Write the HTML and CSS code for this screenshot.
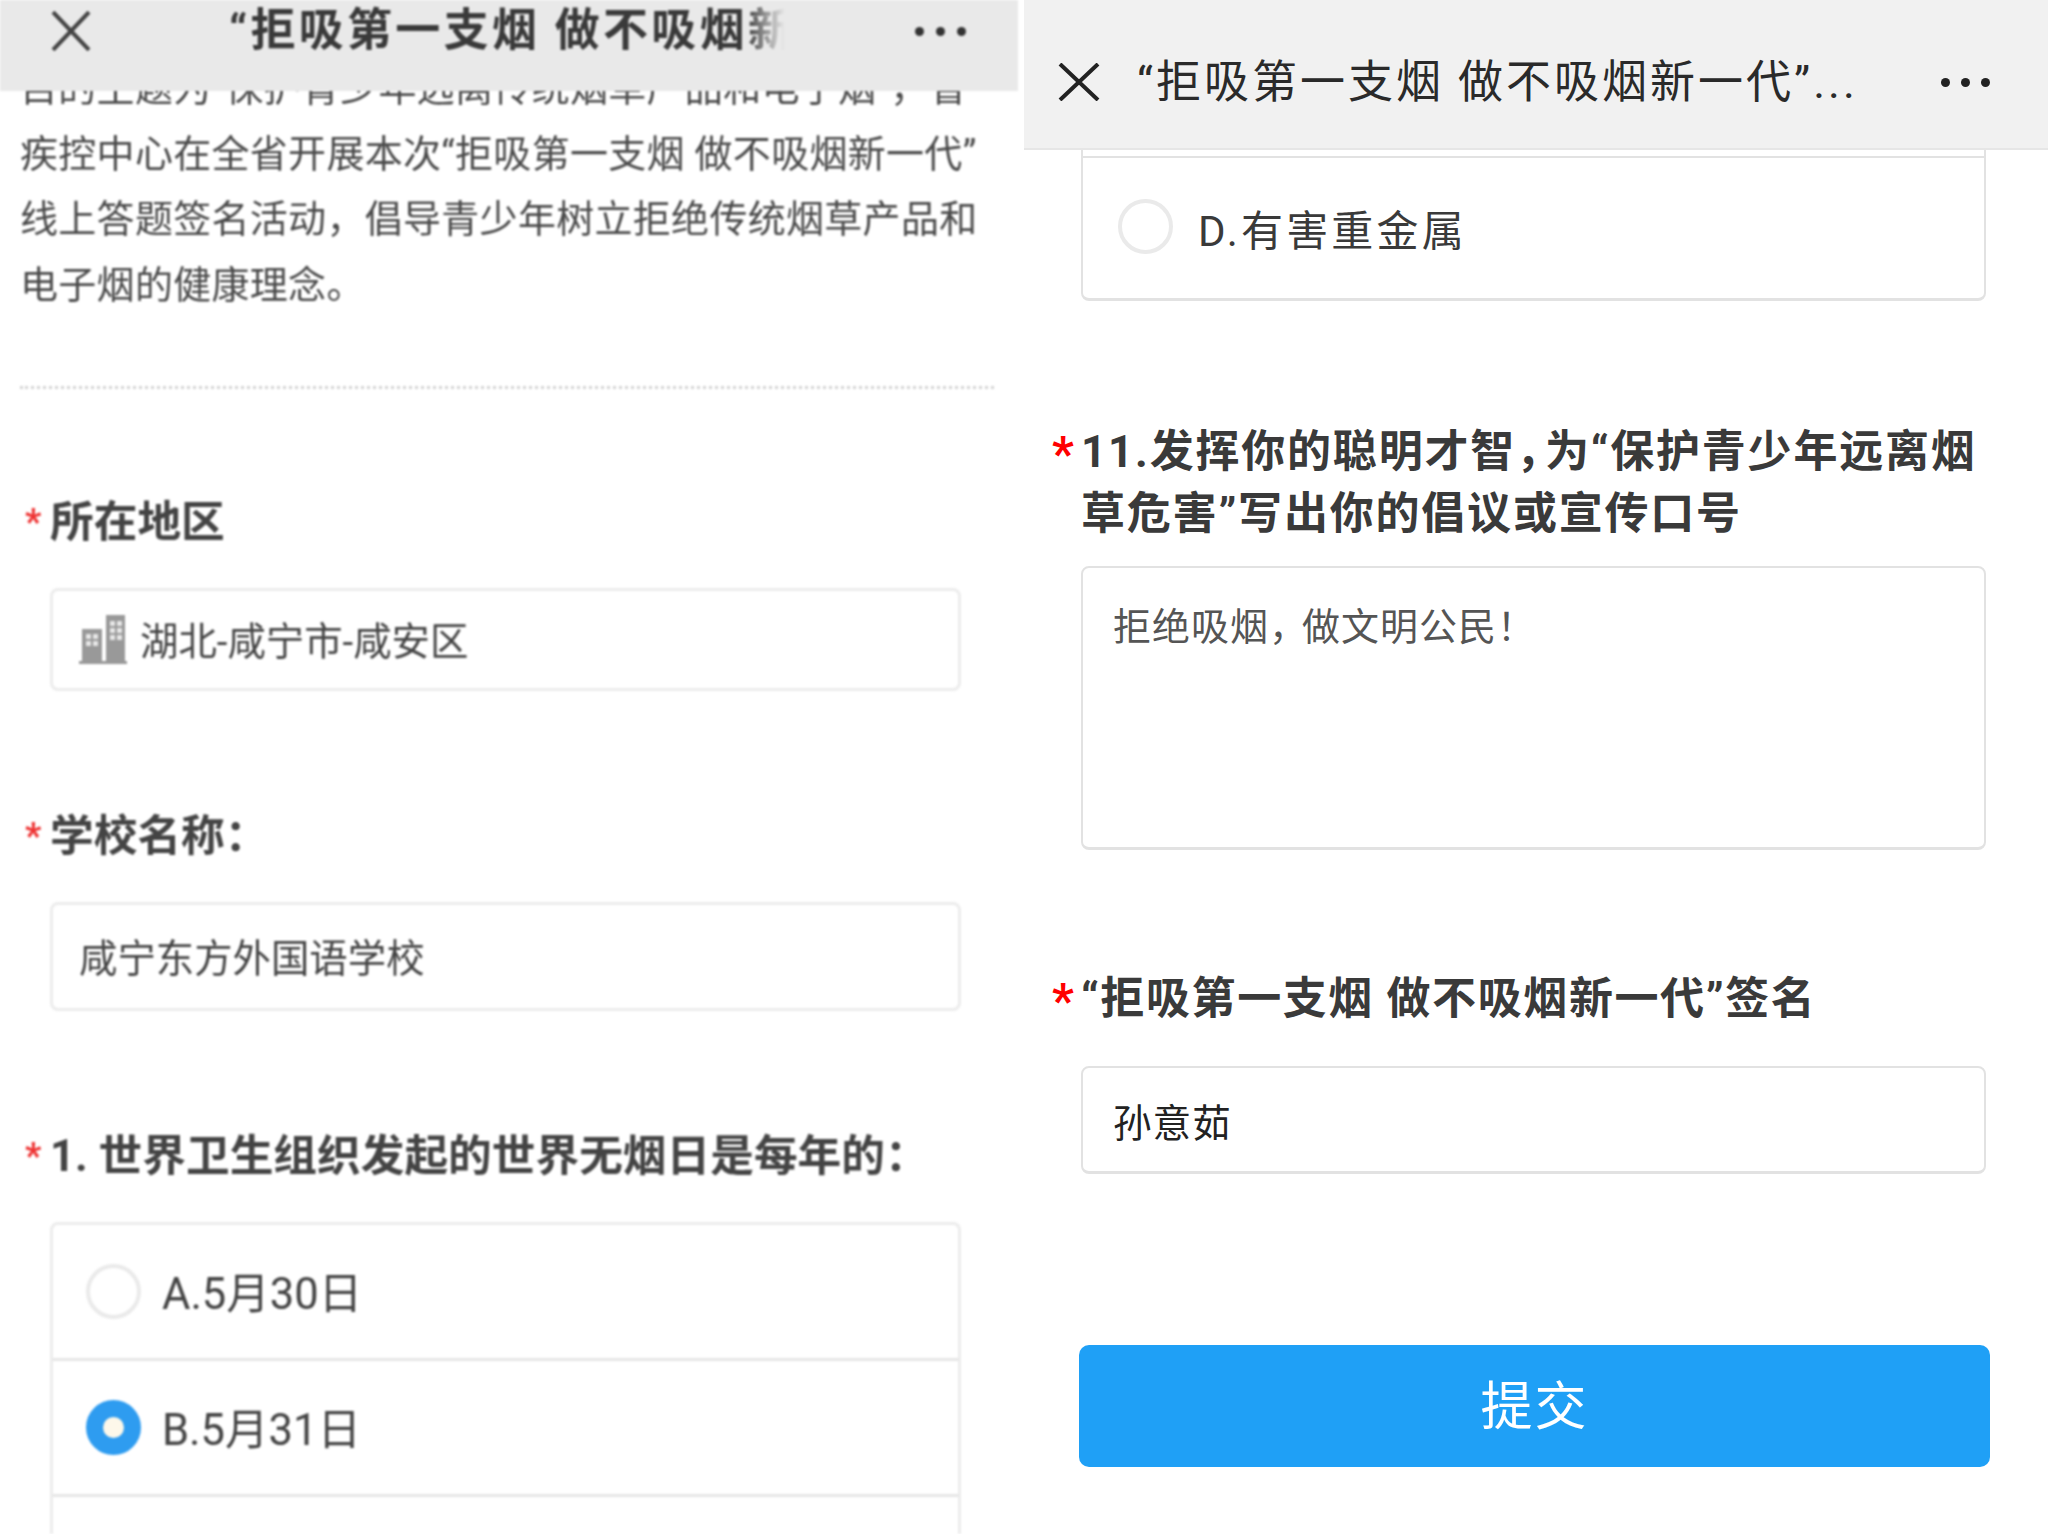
FILE: index.html
```html
<!DOCTYPE html>
<html lang="zh-CN">
<head>
<meta charset="utf-8">
<title>拒吸第一支烟 做不吸烟新一代</title>
<link rel="stylesheet" href="styles.css">
</head>
<body>
<div class="page">
  <section class="panel panel-left">
    <header class="bar bar-left">
      <svg class="close" viewBox="0 0 40 40"><path d="M2 1 38 39M38 1 2 39"/></svg>
      <div class="bar-title">“拒吸第一支烟 做不吸烟新</div>
      <div class="dots"><span></span><span></span><span></span></div>
    </header>
    <p class="intro">目的主题为“保护青少年远离传统烟草产品和电子烟”，省疾控中心在全省开展本次“拒吸第一支烟 做不吸烟新一代”线上答题签名活动，倡导青少年树立拒绝传统烟草产品和电子烟的健康理念。</p>
    <div class="divider"></div>
    <div class="field">
      <div class="label"><span class="star">*</span><span>所在地区</span></div>
      <div class="box box-region">
        <svg class="building" viewBox="0 0 48 50">
          <rect x="3" y="14" width="20" height="33" fill="#999"/>
          <rect x="27" y="0" width="19" height="48" fill="#999"/>
          <rect x="0" y="46" width="48" height="3" fill="#999"/>
          <path d="M7 19h5v5H7zM14 19h5v5h-5zM7 26h5v5H7zM14 26h5v5h-5zM31 6h5v5h-5zM38 6h5v5h-5zM31 13h5v5h-5zM38 13h5v5h-5zM31 20h5v5h-5zM38 20h5v5h-5z" fill="#e6e6e6"/>
        </svg>
        <span>湖北-咸宁市-咸安区</span>
      </div>
    </div>
    <div class="field">
      <div class="label"><span class="star">*</span><span>学校名称：</span></div>
      <div class="box box-school"><span>咸宁东方外国语学校</span></div>
    </div>
    <div class="field">
      <div class="label"><span class="star">*</span><span>1. 世界卫生组织发起的世界无烟日是每年的：</span></div>
      <div class="options">
        <div class="option"><span class="radio"></span><span class="opt-text">A.5月30日</span></div>
        <div class="option"><span class="radio radio-on"></span><span class="opt-text">B.5月31日</span></div>
        <div class="option option-last"><span class="radio"></span></div>
      </div>
    </div>
  </section>

  <section class="panel panel-right">
    <header class="bar bar-right">
      <svg class="close close-r" viewBox="0 0 42 38"><path d="M2 1 40 37M40 1 2 37"/></svg>
      <div class="bar-title-r">“拒吸第一支烟 做不吸烟新一代”...</div>
      <div class="dots dots-r"><span></span><span></span><span></span></div>
    </header>
    <div class="options-r">
      <div class="stub"></div>
      <div class="option-r"><span class="radio"></span><span class="opt-text-r">D.有害重金属</span></div>
    </div>
    <div class="label-r label-r-first">
      <span class="star-r">*</span>
      <div class="label-lines">
        <div class="label-line"><span>11.发挥你的聪明才智</span><span class="comma">，</span><span>为“保护青少年远离烟</span></div>
        <div class="label-line"><span>草危害”写出你的倡议或宣传口号</span></div>
      </div>
    </div>
    <div class="textarea"><span>拒绝吸烟</span><span class="comma-sm">，</span><span>做文明公民！</span></div>
    <div class="label-r label-r-sign"><span class="star-r">*</span><span>“拒吸第一支烟 做不吸烟新一代”签名</span></div>
    <div class="input-r">孙意茹</div>
    <button class="submit" type="button">提交</button>
  </section>
</div>
</body>
</html>
```
FILE: styles.css
```css
* { box-sizing: border-box; }
html, body { margin: 0; padding: 0; background: #fff; }
body { font-family: Roboto, "Noto Sans CJK SC", sans-serif; color: #444; }
.page { display: flex; width: 2048px; height: 1534px; overflow: hidden; background: #fff; }
.panel { overflow: hidden; height: 1534px; }
.panel-left { width: 1018px; margin-right: 6px; filter: blur(0.9px); }
.panel-right { width: 1024px; }

.bar { display: flex; align-items: center; position: relative; z-index: 2; }
.bar-left { height: 91px; background: #e9e9e9; padding: 0 0 29px 51px; }
.bar-right { height: 150px; background: #f1f1f1; border-bottom: 2px solid #e6e6e6; padding: 17px 0 0 34px; }
.close { width: 40px; height: 40px; flex: none; fill: none; stroke: #444; stroke-width: 4; }
.close-r { width: 42px; height: 38px; margin-top: -2px; stroke: #222; }
.bar-title { margin-left: 138px; width: max-content; white-space: nowrap; font-size: 45px; line-height: 56px; font-weight: 700; letter-spacing: 3.3px; color: #3a3a3a; -webkit-mask-image: linear-gradient(90deg, #000 91%, transparent 98%); mask-image: linear-gradient(90deg, #000 91%, transparent 98%); }
.bar-title-r { margin-left: 37px; white-space: nowrap; font-size: 45px; line-height: 60px; letter-spacing: 3px; color: #2a2a2a; }
.dots { display: flex; gap: 12px; margin-left: auto; margin-right: 52px; }
.dots span { width: 9px; height: 9px; border-radius: 50%; background: #333; }
.dots-r { gap: 11px; margin-right: 58px; }
.dots-r span { background: #222; }

.intro { margin: -35px 0 0; padding: 0 20px; width: 1012px; font-size: 38px; line-height: 65.5px; letter-spacing: 0.3px; color: #4a4a4a; height: 262px; }
.divider { margin: 68px 24px 106px 20px; border-top: 3px dotted #d4d4d4; }
.field { margin-bottom: 118px; }
.label { display: flex; height: 50px; margin-bottom: 43px; font-size: 43.7px; line-height: 54px; font-weight: 700; color: #444; white-space: nowrap; }
.star { width: 25px; margin-left: 25px; color: #e33; font-size: 36px; font-weight: 700; }
.box { display: flex; align-items: center; width: 911px; margin-left: 50px; border: 3px solid #ececec; border-radius: 8px; padding: 0 0 4px 26px; font-size: 38.4px; color: #444; }
.box-region { height: 103px; gap: 13px; }
.box-school { height: 109px; }
.building { width: 48px; height: 50px; flex: none; margin-top: 4px; }
.options { width: 911px; margin-left: 50px; border: 3px solid #ececec; border-bottom: 0; border-radius: 8px 8px 0 0; }
.option { display: flex; align-items: center; height: 136px; padding-left: 33px; border-bottom: 3px solid #e6e6e6; }
.option-last { align-items: flex-start; border-bottom: 0; padding-top: 38px; }
.radio { width: 55px; height: 55px; flex: none; border-radius: 50%; border: 4px solid #eaeaea; background: #fff; }
.radio-on { border: 17px solid #2e9cf0; background: #fdf8ea; }
.opt-text { margin-left: 21px; padding-bottom: 2px; font-size: 43.5px; color: #444; }

.options-r { width: 905px; margin-left: 57px; border: 2px solid #e2e2e2; border-top: 0; border-bottom-width: 3px; border-radius: 0 0 8px 8px; }
.stub { height: 8px; border-bottom: 2px solid #e2e2e2; }
.option-r { display: flex; align-items: center; height: 140px; padding: 0 0 3px 35px; }
.opt-text-r { margin-left: 25px; padding-top: 2px; font-size: 42px; letter-spacing: 3.2px; color: #3a3a3a; }

.label-r { display: flex; margin-left: 28px; width: 968px; font-size: 44px; line-height: 62px; font-weight: 700; letter-spacing: 1.8px; color: #3a3a3a; }
.label-r-first { margin-top: 120px; }
.label-r-sign { margin-top: 118px; letter-spacing: 1.6px; }
.star-r { width: 29px; height: 62px; flex: none; color: #f00; font-size: 48px; line-height: 66px; }
.label-line { display: flex; white-space: pre; }
.comma { font-feature-settings: "halt"; margin-right: 5px; }
.comma-sm { font-feature-settings: "halt"; margin-right: 13px; }
.textarea { width: 905px; height: 284px; margin: 21px 0 0 57px; border: 2px solid #e2e2e2; border-bottom-width: 3px; border-radius: 8px; padding: 30px 30px; font-size: 38px; line-height: 58px; letter-spacing: 1px; color: #555; }
.input-r { display: flex; align-items: center; width: 905px; height: 108px; margin: 36px 0 0 57px; border: 2px solid #e2e2e2; border-bottom-width: 3px; border-radius: 8px; padding: 0 30px; font-size: 38.6px; letter-spacing: 1px; color: #222; }
.submit { display: block; width: 911px; height: 122px; margin: 171px 0 0 55px; padding: 0 0 7px; border: 0; border-radius: 10px; background: #1fa0f6; color: #fff; font-family: inherit; font-size: 52px; letter-spacing: 2px; }
```
